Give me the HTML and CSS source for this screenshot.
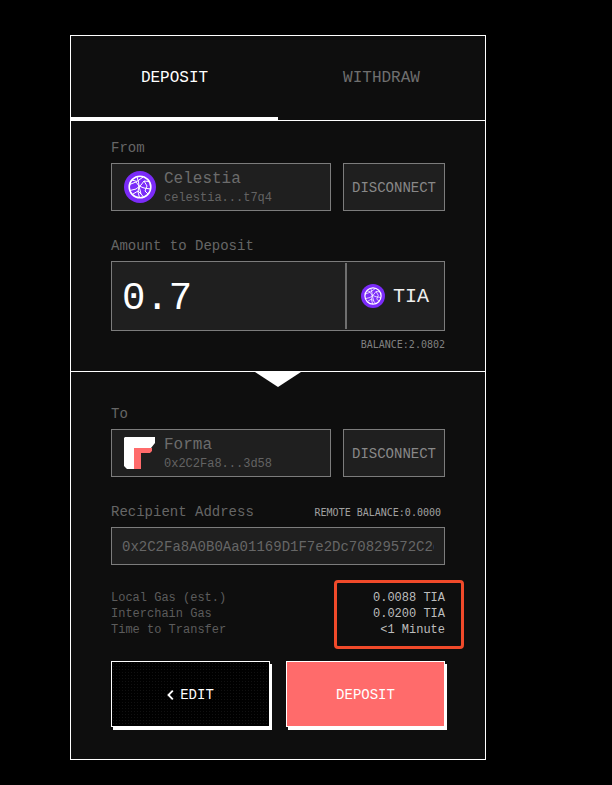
FILE: index.html
```html
<!DOCTYPE html>
<html lang="en">
<head>
<meta charset="utf-8">
<title>Deposit</title>
<link rel="stylesheet" href="styles.css">
</head>
<body>
<main class="card">
  <nav class="tabs">
    <div class="tab tab-active">DEPOSIT</div>
    <div class="tab">WITHDRAW</div>
  </nav>
  <section class="panel panel-from">
    <div class="label">From</div>
    <div class="wallet-row">
      <div class="wallet">
        <svg class="chain-icon" viewBox="0 0 32 32"><use href="#celestia"/></svg>
        <div class="wallet-text">
          <div class="wallet-name">Celestia</div>
          <div class="wallet-addr">celestia...t7q4</div>
        </div>
      </div>
      <div class="disconnect">DISCONNECT</div>
    </div>
    <div class="label label-gap">Amount to Deposit</div>
    <div class="amount">
      <div class="amount-value">0.7</div>
      <div class="amount-token">
        <svg class="token-icon" viewBox="0 0 32 32"><use href="#celestia"/></svg>
        <span>TIA</span>
      </div>
    </div>
    <div class="balance">BALANCE:2.0802</div>
  </section>
  <section class="panel panel-to">
    <div class="arrow"></div>
    <div class="label">To</div>
    <div class="wallet-row">
      <div class="wallet">
        <svg class="chain-icon" viewBox="0 0 32 32">
          <path fill="#fff" d="M1 0H31V6L27 11H10V32H3L0 29V1z"/>
          <path fill="#ff6b6b" d="M10 11H28V14L26 16H17V32H10z"/>
        </svg>
        <div class="wallet-text">
          <div class="wallet-name">Forma</div>
          <div class="wallet-addr">0x2C2Fa8...3d58</div>
        </div>
      </div>
      <div class="disconnect">DISCONNECT</div>
    </div>
    <div class="recipient-head">
      <div class="label">Recipient Address</div>
      <div class="remote">REMOTE BALANCE:0.0000</div>
    </div>
    <input class="address" type="text" readonly value="0x2C2Fa8A0B0Aa01169D1F7e2Dc70829572C2d3d58">
    <div class="gas">
      <div class="gas-labels">
        <div>Local Gas (est.)</div>
        <div>Interchain Gas</div>
        <div>Time to Transfer</div>
      </div>
      <div class="gas-values">
        <div>0.0088 TIA</div>
        <div>0.0200 TIA</div>
        <div>&lt;1 Minute</div>
      </div>
      <div class="highlight"></div>
    </div>
    <div class="actions">
      <div class="btn btn-edit">
        <svg class="chevron" viewBox="0 0 7 10"><path d="M5.800 .7 1.500 5l4.300 4.300" fill="none" stroke="#fff" stroke-width="1.900"/></svg>
        <span>EDIT</span>
      </div>
      <div class="btn btn-deposit">DEPOSIT</div>
    </div>
  </section>
</main>
<svg class="defs" width="0" height="0" aria-hidden="true">
  <symbol id="celestia" viewBox="0 0 32 32">
    <circle cx="16" cy="16" r="16" fill="#7b2bf9"/>
    <g fill="none" stroke="#fff" stroke-width="1">
      <circle cx="16" cy="16" r="10.800" stroke-width="1.600"/>
      <path d="M5.500 13.500 12 11l3 4 2 8 3 3.500"/>
      <path d="M6 19.500l6-1.500 5-4 3-4 5 .5"/>
      <path d="M13 6l1.500 5 .5 4-1 6 1.500 5.500"/>
      <path d="M15 15l5 2 6.500 1"/>
      <path d="M8 9l5 1.500 6-4.500"/>
      <path d="M20 10l3 5-2 5 3 3"/>
      <path d="M9 23l5-3 3 3"/>
    </g>
  </symbol>
</svg>
</body>
</html>
```
FILE: styles.css
```css
* { box-sizing: border-box; }
html, body { margin: 0; height: 100%; background: #000; }
body {
  padding: 35px 0 0 70px;
  font-family: "Liberation Mono", "DejaVu Sans Mono", monospace;
  overflow: hidden;
}
.defs { position: absolute; }
.card {
  width: 416px;
  height: 725px;
  border: 1px solid #fff;
  background: #0e0e0e;
}
.tabs {
  display: flex;
  height: 85px;
  border-bottom: 1px solid #fff;
}
.tab {
  flex: 1;
  display: flex;
  align-items: center;
  justify-content: center;
  padding-bottom: 1px;
  font-size: 16px;
  color: #6f6f6f;
}
.tab-active {
  color: #fff;
  box-shadow: inset 0 -3px 0 #fff;
}
.panel { padding: 19px 40px 0; }
.panel-from {
  height: 251px;
  border-bottom: 1px solid #fff;
}
.panel-to {
  position: relative;
  padding-top: 34px;
}
.arrow {
  position: absolute;
  left: 184px;
  top: 0;
  width: 0;
  height: 0;
  border-left: 23px solid transparent;
  border-right: 23px solid transparent;
  border-top: 15px solid #fff;
}
.label {
  font-size: 14px;
  line-height: 16px;
  color: #666;
}
.label-gap { margin-top: 27px; }
.wallet-row {
  display: flex;
  gap: 12px;
  margin-top: 7px;
}
.wallet {
  width: 220px;
  height: 48px;
  display: flex;
  align-items: center;
  gap: 8px;
  padding-left: 12px;
  background: #1f1f1f;
  border: 1px solid #7c7c7c;
}
.chain-icon { width: 32px; height: 32px; flex: none; }
.wallet-text {
  display: flex;
  flex-direction: column;
  padding-top: 2px;
}
.wallet-name {
  font-size: 16px;
  line-height: 20px;
  color: #6c6c6c;
}
.wallet-addr {
  font-size: 12px;
  line-height: 18px;
  color: #636363;
}
.disconnect {
  width: 102px;
  height: 48px;
  display: flex;
  align-items: center;
  justify-content: center;
  padding-top: 2px;
  font-size: 14px;
  color: #888;
  background: #1f1f1f;
  border: 1px solid #7c7c7c;
}
.amount {
  display: flex;
  height: 70px;
  margin-top: 7px;
  padding: 1px;
  background: #1f1f1f;
  border: 1px solid #7c7c7c;
}
.amount-value {
  width: 234px;
  display: flex;
  align-items: center;
  padding: 5px 0 0 9px;
  font-size: 39px;
  color: #fff;
  border-right: 2px solid #6f6f6f;
}
.amount-token {
  flex: 1;
  display: flex;
  align-items: center;
  gap: 8px;
  padding-left: 14px;
  font-size: 20px;
  color: #eee;
}
.token-icon { width: 24px; height: 24px; flex: none; }
.balance {
  margin-top: 8px;
  font-family: "DejaVu Sans Mono", monospace;
  font-size: 10px;
  line-height: 12px;
  text-align: right;
  color: #808080;
}
.recipient-head {
  display: flex;
  justify-content: space-between;
  align-items: center;
  margin-top: 27px;
  padding-right: 4px;
}
.remote {
  font-family: "DejaVu Sans Mono", monospace;
  font-size: 10px;
  color: #a0a0a0;
}
.address {
  display: block;
  width: 100%;
  height: 38px;
  margin: 7px 0 0;
  padding: 2px 10px 0 10px;
  font-family: inherit;
  font-size: 14px;
  color: #666;
  background: #1f1f1f;
  border: 1px solid #7c7c7c;
  border-radius: 0;
  outline: none;
}
.gas {
  position: relative;
  display: flex;
  justify-content: space-between;
  margin-top: 25px;
  font-size: 12px;
  line-height: 16px;
}
.gas-labels { color: #5c5c5c; }
.gas-values {
  text-align: right;
  color: #bdbdbd;
}
.highlight {
  position: absolute;
  left: 223px;
  top: -10px;
  width: 130px;
  height: 69px;
  border: 3px solid #f04a2a;
  border-radius: 4px;
}
.actions {
  display: flex;
  gap: 16px;
  margin-top: 23px;
}
.btn {
  width: 159px;
  height: 66px;
  display: flex;
  align-items: center;
  justify-content: center;
  padding-top: 2px;
  font-size: 14px;
  color: #fff;
  border: 1px solid #fff;
  box-shadow: 2px 3px 0 #fff;
}
.btn-edit {
  gap: 6px;
  background-color: #000;
  background-image: radial-gradient(#111 0.5px, transparent 0.6px);
  background-size: 3px 3px;
}
.btn-deposit { background: #ff6b6b; }
.chevron { width: 7px; height: 10px; }
```
